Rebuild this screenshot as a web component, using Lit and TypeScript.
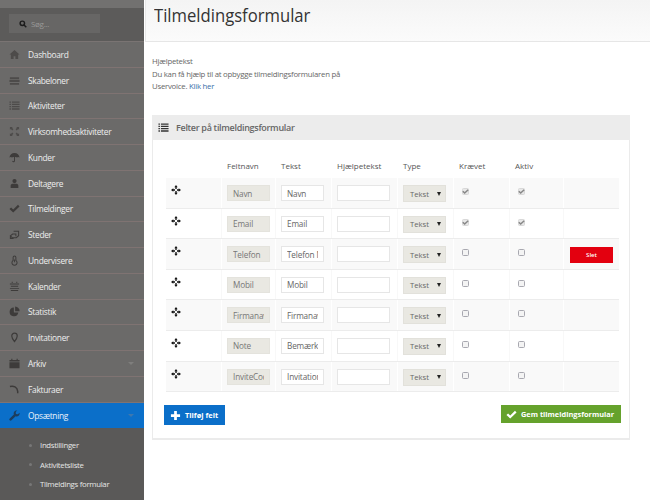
import { LitElement, html, css, svg } from 'lit';
import { customElement } from 'lit/decorators.js';

const icons: Record<string, unknown> = {
  home: svg`<path d="M6 1 0.5 6H2v5h3V8h2v3h3V6h1.5z"/>`,
  stack: svg`<path d="M1 2.5h10v2H1zM0.5 5.5h11v2.2h-11zM1 8.7h10v2H1z"/>`,
  list: svg`<path d="M0.5 1.5h1.6v1.4H0.5zM3.2 1.5h8.3v1.4H3.2zM0.5 4h1.6v1.4H0.5zM3.2 4h8.3v1.4H3.2zM0.5 6.6h1.6V8H0.5zM3.2 6.6h8.3V8H3.2zM0.5 9.1h1.6v1.4H0.5zM3.2 9.1h8.3v1.4H3.2z"/>`,
  expand: svg`<path d="M1 1h3.2L3.2 2l1.6 1.6-1.2 1.2L2 3.2 1 4.2zM11 1v3.2L10 3.2 8.400 4.800 7.200 3.600 8.800 2 7.800 1zM1 11V7.800l1 1 1.600-1.600 1.200 1.200L3.200 10l1 1zM11 11H7.800l1-1-1.600-1.600 1.200-1.200L10 8.800l1-1z"/>`,
  umbrella: svg`<path d="M6 1C3 1 .8 3 .5 6c1-.8 2-.8 2.800 0 .7-.8 1.500-.8 2.200-.2V9.500c0 .7-.8.8-1.200.1l-.9.4c.6 1.600 3.100 1.500 3.100-.5V5.800c.7-.6 1.500-.6 2.200.2.800-.8 1.800-.8 2.800 0C11.200 3 9 1 6 1z"/>`,
  user: svg`<circle cx="6" cy="3.300" r="2.300"/><path d="M1.800 11V8.500C1.800 7 3 6.300 4.500 6.300h3c1.500 0 2.700.7 2.700 2.200V11z"/>`,
  check: svg`<path d="M.5 6.500 2.300 4.800 4.600 7 9.800 2 11.500 3.700 4.600 10.300z"/>`,
  tags: svg`<path fill="none" stroke="currentColor" stroke-width="1.100" d="M5 2.500h5.500v4.800L8 9.500H3.500L1.500 7.500 4 5.500h3.500V8M1.500 7.500v2.800H5"/>`,
  temp: svg`<path fill="none" stroke="currentColor" stroke-width="1.100" d="M4.500 6V2.500a1.500 1.500 0 0 1 3 0V6a2.800 2.800 0 1 1-3 0z"/><path d="M5.500 5h1v3h-1z"/>`,
  cal: svg`<path d="M3 .8h1v1.500H3zM8 .8h1v1.500H8zM1 2.800h10v1H1zM2 5.300h8v1H2zM1 7.500h10v1H1zM2 9.800h8v1H2z"/>`,
  pie: svg`<path d="M5.300 1.500a4.800 4.800 0 1 0 4.900 5.600H5.300z"/><path d="M6.700.5v5.200h4.900A5 5 0 0 0 6.700.5z"/>`,
  pin: svg`<path fill="none" stroke="currentColor" stroke-width="1.300" d="M6 1.300a3 3 0 0 1 3 3C9 6.500 6 10.500 6 10.500S3 6.500 3 4.300a3 3 0 0 1 3-3z"/>`,
  archive: svg`<path d="M2.500 .8h1.200v1.500H2.500zM8.300 .8h1.200v1.500H8.300zM.5 2.200h11v1.600H.5zM.5 4.700h11v6.500H.5z"/>`,
  hook: svg`<path fill="none" stroke="currentColor" stroke-width="1.600" d="M1 2.800c4-.8 8 .2 8.500 5.200v2"/>`,
  wrench: svg`<path d="M8.300.5a3.200 3.200 0 0 0-3 4.300L.8 9.300a1.300 1.300 0 0 0 1.900 1.900l4.500-4.500A3.200 3.200 0 0 0 11.500 3L9.700 4.700 7.600 4.400 7.300 2.300 9 .6a3 3 0 0 0-.7-.1z"/>`,
};

const icon = (name: string) =>
  html`<svg class="icon" viewBox="0 0 12 12" fill="currentColor">${icons[name]}</svg>`;

const navItems = [
  { label: 'Dashboard', icon: 'home', dim: true },
  { label: 'Skabeloner', icon: 'stack', dim: true },
  { label: 'Aktiviteter', icon: 'list', dim: true },
  { label: 'Virksomhedsaktiviteter', icon: 'expand', dim: true },
  { label: 'Kunder', icon: 'umbrella' },
  { label: 'Deltagere', icon: 'user' },
  { label: 'Tilmeldinger', icon: 'check' },
  { label: 'Steder', icon: 'tags' },
  { label: 'Undervisere', icon: 'temp' },
  { label: 'Kalender', icon: 'cal' },
  { label: 'Statistik', icon: 'pie' },
  { label: 'Invitationer', icon: 'pin' },
  { label: 'Arkiv', icon: 'archive', caret: true },
  { label: 'Fakturaer', icon: 'hook' },
  { label: 'Opsætning', icon: 'wrench', caret: true, active: true },
];

const subItems = ['Indstillinger', 'Aktivitetsliste', 'Tilmeldings formular'];

const fields = [
  { name: 'Navn', text: 'Navn', locked: true },
  { name: 'Email', text: 'Email', locked: true },
  { name: 'Telefon', text: 'Telefon Nummer', del: true },
  { name: 'Mobil', text: 'Mobil' },
  { name: 'Firmanavn', text: 'Firmanavn' },
  { name: 'Note', text: 'Bemærkning' },
  { name: 'InviteCode', text: 'Invitation' },
];

@customElement('app-root')
export class AppRoot extends LitElement {
  static styles = css`
    :host {
      display: flex;
      width: 650px;
      height: 500px;
      overflow: hidden;
      background: #fff;
      font-family: 'Open Sans', sans-serif;
      color: #555;
    }

    .sidebar {
      width: 144px;
      flex-shrink: 0;
      background: #6b6a69;
      display: flex;
      flex-direction: column;
      color: #eee;
      font-size: 8.4px;
      letter-spacing: -0.3px;
    }
    .top-strip {
      height: 8px;
      background: #727170;
    }
    .search-wrap {
      height: 34px;
      padding: 6px 9px 8px;
      box-sizing: border-box;
      background: #5c5b5a;
      border-bottom: 1px solid #7a7473;
    }
    .search {
      width: 91px;
      height: 19px;
      background: #676665;
      display: flex;
      align-items: center;
      gap: 4px;
      padding-left: 10px;
      box-sizing: border-box;
      font-size: 8px;
      color: #9a9998;
    }
    .search svg {
      width: 8px;
      height: 8px;
      color: #1c1c1c;
    }
    .nav-item {
      height: 25.75px;
      box-sizing: border-box;
      display: flex;
      align-items: center;
      padding-left: 9px;
      border-bottom: 1px solid #7f7372;
    }
    .nav-item.active {
      background: #0b6fc9;
      border-bottom: none;
      color: #e8f1fa;
    }
    .icon {
      width: 11px;
      height: 11px;
      margin-right: 8px;
      color: #3d3b3a;
      flex-shrink: 0;
    }
    .dim .icon {
      color: #4d4b4a;
    }
    .nav-item.active .icon {
      color: #1c3d5e;
    }
    .caret {
      margin-left: auto;
      margin-right: 10px;
      width: 0;
      height: 0;
      border-left: 3px solid transparent;
      border-right: 3px solid transparent;
      border-top: 3px solid #7f7e7d;
    }
    .active .caret {
      border-top-color: #3d78b0;
    }
    .sub {
      flex: 1;
      background: #5a5958;
      padding-top: 7px;
    }
    .sub-item {
      height: 19.5px;
      display: flex;
      align-items: center;
      padding-left: 29px;
      gap: 8px;
      font-size: 7.8px;
      color: #e6e6e6;
    }
    .sub-item::before {
      content: '';
      width: 3px;
      height: 3px;
      border-radius: 50%;
      background: #777;
    }

    .main {
      flex: 1;
      min-width: 0;
      padding-left: 2px;
      display: flex;
      flex-direction: column;
    }
    .header {
      height: 42px;
      box-sizing: border-box;
      margin-left: -1px;
      padding: 0 0 13px 8px;
      background: linear-gradient(#f4f4f4, #fbfbfb);
      border-bottom: 1px solid #e6e6e6;
      border-left: 1px solid #e8e8e8;
      display: flex;
      align-items: center;
    }
    h1 {
      margin: 0;
      font-size: 18.5px;
      font-weight: 400;
      color: #333;
      transform: scaleX(0.9);
      transform-origin: left center;
    }
    .help {
      margin: 13px 0 0 6px;
      font-size: 7.8px;
      letter-spacing: -0.25px;
      line-height: 12.5px;
      color: #666;
      height: 60px;
    }
    .help a {
      color: #3a6ea8;
      text-decoration: none;
    }

    .panel {
      margin-left: 6px;
      width: 478px;
      height: 325px;
      box-sizing: border-box;
      border: 1px solid #ebebeb;
      border-top: none;
      border-bottom-width: 2px;
      display: flex;
      flex-direction: column;
    }
    .panel-head {
      height: 25px;
      flex-shrink: 0;
      background: #ececec;
      display: flex;
      align-items: center;
      padding-left: 6px;
      margin: 0 -1px;
      font-size: 9px;
      letter-spacing: -0.3px;
      font-weight: 600;
      color: #666;
    }
    .panel-head .icon {
      margin-right: 7px;
      color: #333;
    }
    .panel-body {
      padding: 0 10px 0 13px;
      flex: 1;
      display: flex;
      flex-direction: column;
    }
    .grid-row {
      display: grid;
      grid-template-columns: 55px 54px 56px 66px 56px 56px 54px 56px;
      height: 30.6px;
      box-sizing: border-box;
      border-bottom: 1px solid #ececec;
    }
    .grid-row.head {
      height: 38px;
      border-bottom: none;
      font-size: 8px;
      color: #555;
      align-items: end;
    }
    .grid-row.head span {
      padding: 0 0 7px 6px;
    }
    .cell {
      padding: 7px 0 0 5px;
      box-sizing: border-box;
      border-left: 1px solid #f8f8f8;
    }
    .cell:first-child {
      border-left: none;
    }
    .stripe .cell {
      background: #f9f9f9;
      border-left-color: #fff;
    }
    .move {
      display: block;
      width: 10px;
      height: 10px;
      color: #111;
    }
    input[type='text'] {
      display: block;
      width: 43px;
      height: 16px;
      box-sizing: border-box;
      margin: 0;
      padding: 0 5px;
      border: 1px solid #e6e6e6;
      border-radius: 0;
      background: #fff;
      font: 8.2px 'Open Sans', sans-serif;
      letter-spacing: -0.15px;
      color: #666;
      outline: none;
    }
    input.ro {
      background: #e9e8e2;
      border-color: #e4e3dd;
      color: #777;
    }
    input.wide {
      width: 53px;
    }
    .select {
      width: 43px;
      height: 17px;
      box-sizing: border-box;
      background: #e9e8e2;
      border: 1px solid #e2e1db;
      display: flex;
      align-items: center;
      justify-content: space-between;
      padding: 0 4px 0 6px;
      font-size: 7.7px;
      color: #666;
    }
    .select i {
      width: 0;
      height: 0;
      border-left: 2px solid transparent;
      border-right: 2px solid transparent;
      border-top: 4px solid #222;
    }
    .check {
      width: 7px;
      height: 7px;
      margin: 3px 0 0 3px;
      box-sizing: border-box;
      border: 1px solid #a8a8b0;
      border-radius: 1.5px;
      background: #f4f4f4;
      display: block;
    }
    .check.on {
      border-color: #d8d8d8;
      background: #e8e8e8;
      position: relative;
    }
    .check.on svg {
      position: absolute;
      left: -1px;
      top: -1px;
      width: 7px;
      height: 7px;
      color: #888;
    }
    .del {
      display: block;
      width: 43px;
      height: 16px;
      margin: 1px 0 0 1px;
      padding: 0;
      border: none;
      background: #e3000f;
      color: #fff;
      font: 600 6px 'Open Sans', sans-serif;
    }
    .actions {
      display: flex;
      justify-content: space-between;
      margin: 13px -2px 0 -2px;
    }
    .btn {
      border: none;
      display: flex;
      align-items: center;
      color: #fff;
      font: 700 7.4px 'Open Sans', sans-serif;
      padding: 0;
      white-space: nowrap;
    }
    .btn .icon {
      color: #fff;
      margin-right: 4px;
    }
    .btn.add {
      width: 61px;
      height: 20px;
      background: #0b6fc9;
      padding-left: 6px;
    }
    .btn.save {
      width: 120px;
      height: 18px;
      background: #65a22c;
      padding-left: 5px;
    }
  `;

  private moveIcon() {
    return html`<svg class="move" viewBox="0 0 12 12" fill="currentColor">
      <path d="M6 0 8 2.800H6.800v2h-1.600v-2H4zM6 12 4 9.200h1.200v-2h1.600v2H8zM0 6l2.800-2v1.200h2v1.600h-2V8zM12 6 9.200 8V6.800h-2V5.200h2V4z"/>
    </svg>`;
  }

  private renderCheck(on: boolean) {
    return on
      ? html`<span class="check on"><svg viewBox="0 0 12 12" fill="currentColor">${icons.check}</svg></span>`
      : html`<span class="check"></span>`;
  }

  render() {
    return html`
      <aside class="sidebar">
        <div class="top-strip"></div>
        <div class="search-wrap">
          <div class="search">
            <svg viewBox="0 0 12 12" fill="none" stroke="currentColor" stroke-width="2.200">
              <circle cx="5" cy="5" r="3.300"/><path d="M7.500 7.500 11 11"/>
            </svg>
            <span>Søg...</span>
          </div>
        </div>
        ${navItems.map(
          (n) => html`<div class="nav-item ${n.active ? 'active' : ''} ${n.dim ? 'dim' : ''}">
            ${icon(n.icon)}<span>${n.label}</span>
            ${n.caret ? html`<span class="caret"></span>` : ''}
          </div>`
        )}
        <div class="sub">
          ${subItems.map((s) => html`<div class="sub-item">${s}</div>`)}
        </div>
      </aside>

      <div class="main">
        <header class="header"><h1>Tilmeldingsformular</h1></header>
        <div class="help">
          Hjælpetekst<br />
          Du kan få hjælp til at opbygge tilmeldingsformularen på<br />
          Uservoice. <a href="#">Klik her</a>
        </div>

        <section class="panel">
          <div class="panel-head">${icon('list')}Felter på tilmeldingsformular</div>
          <div class="panel-body">
            <div class="grid-row head">
              <span></span><span>Feltnavn</span><span>Tekst</span><span>Hjælpetekst</span>
              <span>Type</span><span>Krævet</span><span>Aktiv</span><span></span>
            </div>
            ${fields.map(
              (f, i) => html`<div class="grid-row ${i % 2 === 0 ? 'stripe' : ''}">
                <div class="cell">${this.moveIcon()}</div>
                <div class="cell"><input type="text" class="ro" readonly .value=${f.name} /></div>
                <div class="cell"><input type="text" .value=${f.text} /></div>
                <div class="cell"><input type="text" class="wide" /></div>
                <div class="cell"><div class="select">Tekst<i></i></div></div>
                <div class="cell">${this.renderCheck(!!f.locked)}</div>
                <div class="cell">${this.renderCheck(!!f.locked)}</div>
                <div class="cell">${f.del ? html`<button class="del">Slet</button>` : ''}</div>
              </div>`
            )}
            <div class="actions">
              <button class="btn add"><svg class="icon" viewBox="0 0 12 12" fill="currentColor"><path d="M4.500 1h3v3.500H11v3H7.500V11h-3V7.500H1v-3h3.500z"/></svg>Tilføj felt</button>
              <button class="btn save">${icon('check')}Gem tilmeldingsformular</button>
            </div>
          </div>
        </section>
      </div>
    `;
  }
}
